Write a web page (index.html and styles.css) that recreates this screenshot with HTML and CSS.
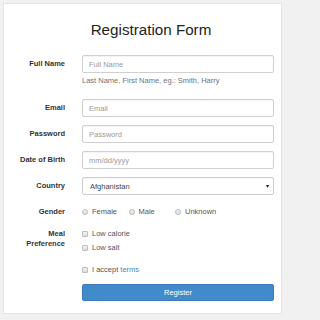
FILE: index.html
```html
<!DOCTYPE html>
<html>
<head>
<meta charset="utf-8">
<link rel="stylesheet" href="styles.css">
</head>
<body>
<div class="card">
  <h1 class="title">Registration Form</h1>
  <form class="form">
    <div class="row row-name">
      <label class="lbl">Full Name</label>
      <div class="ctl">
        <input class="field" type="text" placeholder="Full Name">
        <div class="help">Last Name, First Name, eg.: Smith, Harry</div>
      </div>
    </div>
    <div class="row">
      <label class="lbl">Email</label>
      <div class="ctl"><input class="field" type="text" placeholder="Email"></div>
    </div>
    <div class="row">
      <label class="lbl">Password</label>
      <div class="ctl"><input class="field" type="password" placeholder="Password"></div>
    </div>
    <div class="row">
      <label class="lbl">Date of Birth</label>
      <div class="ctl"><input class="field" type="text" placeholder="mm/dd/yyyy"></div>
    </div>
    <div class="row row-country">
      <label class="lbl">Country</label>
      <div class="ctl select-wrap">
        <select class="field select"><option>Afghanistan</option></select>
        <span class="arrow">&#9662;</span>
      </div>
    </div>
    <div class="row row-gender">
      <label class="lbl lbl-small">Gender</label>
      <div class="ctl radios">
        <label class="opt"><input type="radio" class="radio" name="g">Female</label>
        <label class="opt"><input type="radio" class="radio" name="g">Male</label>
        <label class="opt"><input type="radio" class="radio" name="g">Unknown</label>
      </div>
    </div>
    <div class="row row-meal">
      <label class="lbl lbl-small">Meal<br>Preference</label>
      <div class="ctl checks">
        <label class="opt"><input type="checkbox" class="check">Low calorie</label>
        <label class="opt"><input type="checkbox" class="check">Low salt</label>
      </div>
    </div>
    <div class="row row-accept">
      <span></span>
      <div class="ctl">
        <label class="opt"><input type="checkbox" class="check">I accept&nbsp;<a class="link" href="#">terms</a></label>
      </div>
    </div>
    <div class="row row-btn">
      <span></span>
      <div class="ctl"><button type="button" class="btn">Register</button></div>
    </div>
  </form>
</div>
</body>
</html>
```
FILE: styles.css
```css
html, body {
  margin: 0;
  padding: 0;
}
html {
  background: #f1f1f1;
}
body {
  background: #f1f1f1;
  font-family: "Liberation Sans", Arial, sans-serif;
  font-size: 7.5px;
  color: #333;
  width: 286px;
  height: 320px;
  overflow: hidden;
}
.card {
  box-sizing: border-box;
  margin: 3px 4px 0 3px;
  width: 279px;
  height: 311px;
  background: #fff;
  border: 1px solid #e4e4e4;
  padding: 16px 7px 0 10px;
}
.title {
  margin: 0;
  font-size: 15.2px;
  font-weight: normal;
  line-height: 20px;
  text-align: center;
  color: #222;
  padding-left: 14px;
}
.form {
  margin-top: 15px;
}
.row {
  display: grid;
  grid-template-columns: 51px 192px;
  column-gap: 17px;
  align-items: start;
  margin-bottom: 8px;
}
.lbl {
  text-align: right;
  font-weight: bold;
  line-height: 18px;
  color: #333;
  white-space: nowrap;
}
.lbl-small {
  line-height: 10px;
}
.ctl {
  min-width: 0;
}
.field {
  box-sizing: border-box;
  display: block;
  width: 192px;
  height: 18px;
  margin: 0;
  padding: 0 6px;
  border: 1px solid #cfcfcf;
  border-radius: 2px;
  background: #fff;
  font-family: inherit;
  font-size: 7.5px;
  color: #555;
  box-shadow: inset 0 1px 1px rgba(0,0,0,0.05);
  outline: none;
}
.field::placeholder {
  color: #9a9a9a;
}
.help {
  margin-top: 3px;
  line-height: 10px;
  color: #737373;
}
.row-name {
  margin-bottom: 13px;
}
.select-wrap {
  position: relative;
}
.select {
  -webkit-appearance: none;
  appearance: none;
  padding-left: 7px;
  color: #444;
}
.arrow {
  position: absolute;
  right: 5px;
  top: 4px;
  font-size: 6px;
  line-height: 10px;
  color: #111;
}
.row-country {
  margin-bottom: 12px;
}
.radios {
  display: grid;
  grid-template-columns: 46.5px 46.5px 60px;
}
.opt {
  display: flex;
  align-items: center;
  line-height: 10px;
  color: #555;
  white-space: nowrap;
}
.radio, .check {
  -webkit-appearance: none;
  appearance: none;
  box-sizing: border-box;
  width: 6px;
  height: 6px;
  margin: 0 4px 0 0;
  border: 1px solid #bdbdbd;
  background: linear-gradient(#f4f4f4, #dcdcdc);
}
.radio {
  border-radius: 50%;
}
.check {
  border-radius: 1px;
}
.row-gender {
  margin-bottom: 12px;
}
.checks {
  display: flex;
  flex-direction: column;
  gap: 4px;
}
.row-meal {
  margin-bottom: 12px;
}
.row-accept {
  margin-bottom: 9px;
}
.link {
  color: #4a86c0;
  text-decoration: none;
}
.btn {
  box-sizing: border-box;
  display: block;
  width: 192px;
  height: 17px;
  margin: 0;
  padding: 0;
  border: 1px solid #3a7bbf;
  border-radius: 2px;
  background: #418bca;
  color: #fff;
  font-family: inherit;
  font-size: 7.5px;
}
```
